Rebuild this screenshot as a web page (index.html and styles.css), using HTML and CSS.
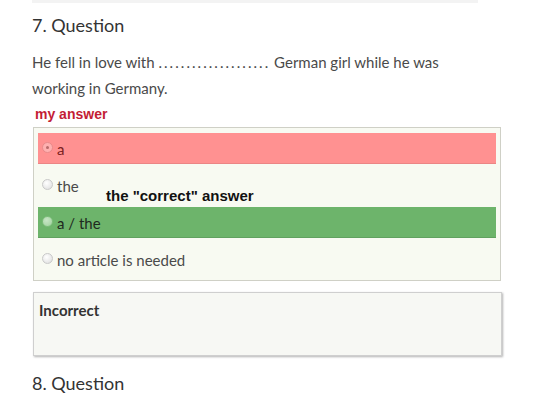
FILE: index.html
```html
<!DOCTYPE html>
<html>
<head>
<meta charset="utf-8">
<link rel="stylesheet" href="styles.css">
</head>
<body>
<div class="page">
  <div class="topbar"></div>
  <h2 class="qtitle">7. Question</h2>
  <p class="qtext">He fell in love with <span class="dots">....................</span> German girl while he was working in Germany.</p>
  <div class="mylabel">my answer</div>
  <div class="options">
    <div class="opt wrong"><span class="radio checked"></span>a</div>
    <div class="opt"><span class="radio"></span>the</div>
    <div class="opt right"><span class="radio"></span>a / the</div>
    <div class="opt"><span class="radio"></span>no article is needed</div>
    <div class="note">the "correct" answer</div>
  </div>
  <div class="result">Incorrect</div>
  <h2 class="qtitle next">8. Question</h2>
</div>
</body>
</html>
```
FILE: styles.css
```css
html, body {
  margin: 0;
  padding: 0;
  background: #ffffff;
}
body {
  font-family: Lato, "Open Sans", sans-serif;
  color: #444;
}
.page {
  width: 470px;
  padding-left: 32px;
}
.topbar {
  width: 446px;
  height: 3px;
  background: #f3f3f3;
}
.qtitle {
  margin: 10px 0 0 0;
  font-size: 18px;
  line-height: 24px;
  font-weight: 400;
  color: #333;
}
.qtext {
  margin: 12px 0 0 0;
  width: 446px;
  font-size: 15px;
  line-height: 26px;
  color: #4a4a4a;
}
.dots {
  letter-spacing: 2.05px;
}
.mylabel {
  margin: 5px 0 0 3px;
  font-family: "Liberation Sans", Arial, sans-serif;
  font-weight: bold;
  font-size: 14px;
  line-height: 16px;
  color: #c31d35;
}
.options {
  position: relative;
  margin: 5px 0 0 1px;
  width: 458px;
  border: 1px solid #cfd0c6;
  background: #f8faf2;
  padding: 5px 4px;
  display: flex;
  flex-direction: column;
  gap: 6px;
}
.opt {
  height: 31px;
  display: flex;
  align-items: center;
  padding-left: 4px;
  font-size: 15px;
  color: #4a4a4a;
}
.opt.wrong {
  background: #ff9191;
  box-shadow: inset 0 -1px 0 rgba(0,0,0,0.08);
  color: #7c2222;
}
.opt.right {
  background: #6db46b;
  box-shadow: inset 0 -1px 0 rgba(0,0,0,0.1);
  color: #1f2a1f;
}
.radio {
  box-sizing: border-box;
  width: 11px;
  height: 11px;
  border-radius: 50%;
  border: 1px solid #c9c9c9;
  background: radial-gradient(circle at 40% 35%, #ffffff 0%, #e6e6e6 70%, #d6d6d6 100%);
  margin-right: 4px;
  margin-top: -3px;
  flex: none;
  position: relative;
}
.wrong .radio {
  border-color: #e98a8a;
  background: #ffb0b0;
}
.wrong .radio.checked::after {
  content: "";
  position: absolute;
  left: 3px;
  top: 3px;
  width: 3px;
  height: 3px;
  border-radius: 50%;
  background: #b86a6a;
}
.right .radio {
  border-color: #7fbf7d;
  background: radial-gradient(circle at 40% 35%, #c8e6c6 0%, #9fd09d 100%);
}
.note {
  position: absolute;
  left: 72px;
  top: 59px;
  font-family: "Liberation Sans", Arial, sans-serif;
  font-weight: bold;
  font-size: 15px;
  line-height: 17px;
  color: #111;
  white-space: nowrap;
}
.result {
  margin: 11px 0 0 1px;
  width: 457px;
  height: 50px;
  border: 1px solid #cfcfcf;
  background: #f7f8f4;
  box-shadow: 1px 1px 2px rgba(0,0,0,0.3);
  padding: 7px 5px 5px 5px;
  font-weight: 700;
  font-size: 15px;
  line-height: 20px;
  color: #333;
}
.qtitle.next {
  margin-top: 15px;
}
```
